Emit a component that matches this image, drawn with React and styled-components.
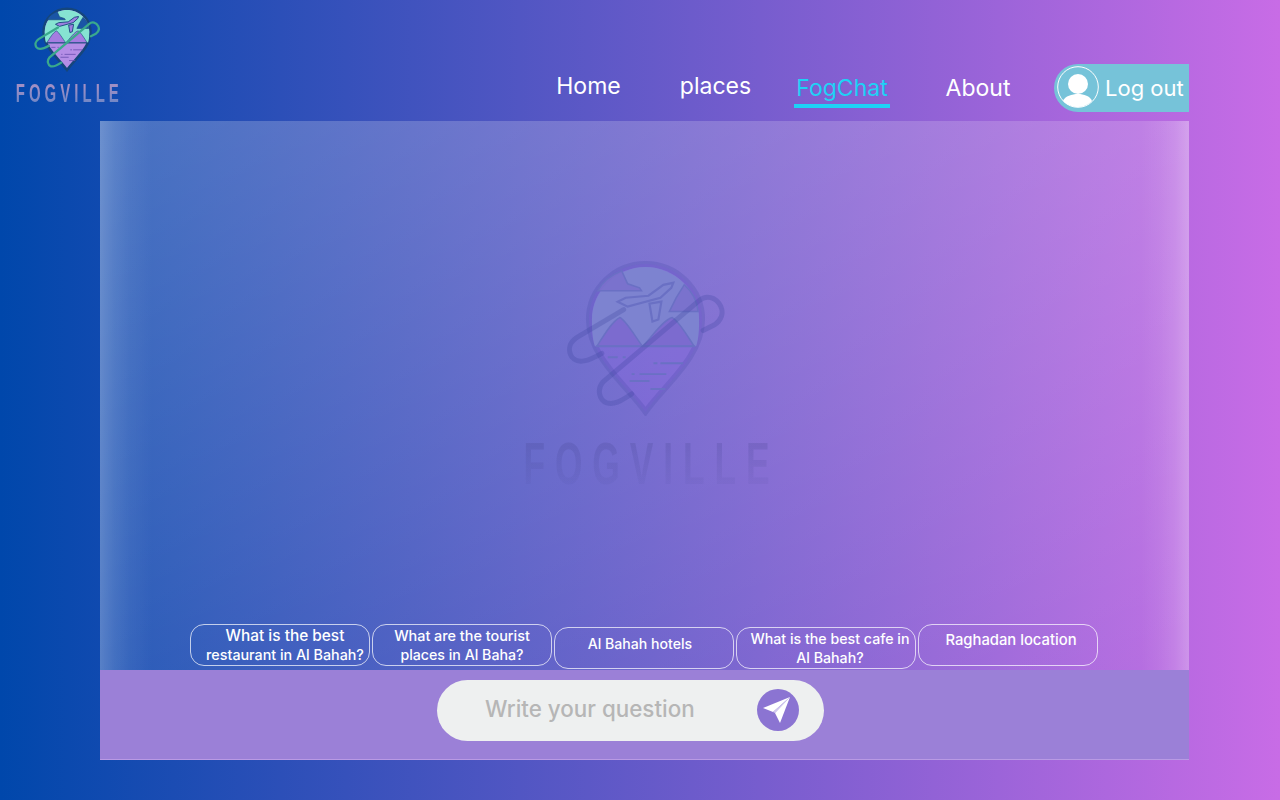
import React from "react";
import styled, { createGlobalStyle } from "styled-components";

const GlobalStyle = createGlobalStyle`
  html, body {
    margin: 0;
    padding: 0;
    height: 100%;
  }
  * {
    box-sizing: border-box;
  }
`;

const Page = styled.div`
  width: 1280px;
  height: 800px;
  overflow: hidden;
  background: linear-gradient(90deg, #0047ab 0%, #c86ce6 100%);
  font-family: "Inter", "Open Sans", sans-serif;
  color: #fff;
`;

const Header = styled.header`
  height: 121px;
  padding: 7px 91px 0 14px;
  display: flex;
  justify-content: space-between;
`;

const Brand = styled.div`
  width: 105px;
  display: flex;
  flex-direction: column;
  align-items: center;
`;

// no condensed face is installed, so the wide one gets squeezed
const Wordmark = styled.div`
  font-family: "Liberation Sans", sans-serif;
  font-size: ${(p) => p.$size}px;
  line-height: 1;
  font-weight: 700;
  letter-spacing: ${(p) => p.$spacing}px;
  margin-right: ${(p) => p.$nudge - p.$spacing}px;
  margin-top: ${(p) => p.$top}px;
  white-space: nowrap;
  flex: none;
  transform: scaleX(0.6);
  color: transparent;
  background: ${(p) => p.$fill};
  -webkit-background-clip: text;
  background-clip: text;
`;

const Nav = styled.nav`
  display: flex;
  align-items: flex-start;
  padding-top: 57px;
`;

const NavLink = styled.a`
  width: ${(p) => p.$width}px;
  height: 48px;
  display: flex;
  justify-content: center;
  align-items: center;
  font-size: 23px;
  padding-bottom: ${(p) => p.$lift}px;
  color: ${(p) => (p.$active ? "#1dd2f6" : "#fff")};
`;

const ActiveLabel = styled.span`
  padding: 0 2px 2px;
  border-bottom: 4px solid #1dd2f6;
  margin-top: 6px;
`;

const LogoutButton = styled.button`
  margin-left: 3px;
  width: 135px;
  height: 48px;
  padding: 0 6px 0 3px;
  border: 0;
  border-radius: 24px 0 0 24px;
  background: #76c3d9;
  color: #fff;
  font: 400 22px "Inter", sans-serif;
  display: flex;
  align-items: center;
  gap: 6px;
  white-space: nowrap;
`;

const AvatarMark = styled.svg`
  flex: none;
  margin-bottom: 3px;
`;

const Panel = styled.main`
  margin-left: 100px;
  width: 1089px;
  height: 639px;
  display: flex;
  flex-direction: column;
  background:
    linear-gradient(90deg, rgba(255, 255, 255, 0.22) 0, rgba(255, 255, 255, 0.12) 14px, rgba(255, 255, 255, 0.05) 30px, rgba(255, 255, 255, 0) 52px),
    linear-gradient(270deg, rgba(255, 255, 255, 0.26) 0, rgba(255, 255, 255, 0.13) 14px, rgba(255, 255, 255, 0.05) 30px, rgba(255, 255, 255, 0) 48px),
    linear-gradient(165deg, rgba(255, 255, 255, 0.22) 0%, rgba(255, 255, 255, 0.12) 50%, rgba(255, 255, 255, 0.02) 100%);
`;

const Chat = styled.section`
  flex: 1;
  min-height: 0;
  display: flex;
  flex-direction: column;
  align-items: center;
  padding-top: 139px;
`;

const Watermark = styled.div`
  display: flex;
  flex-direction: column;
  align-items: center;
  margin-left: 1px;
`;

const Suggestions = styled.div`
  margin-top: auto;
  align-self: flex-start;
  padding-left: 90px;
  display: flex;
  gap: 2px;
  height: 46px;
`;

const Chip = styled.button`
  width: 180px;
  height: 42px;
  margin-top: ${(p) => p.$drop}px;
  padding: ${(p) => (p.$single ? "6px" : "0")} 0 0 ${(p) => Math.max(p.$shift * 2, 0)}px;
  padding-right: ${(p) => Math.max(-p.$shift * 2, 0)}px;
  border: 1px solid rgba(255, 255, 255, 0.7);
  border-radius: 14px;
  background: transparent;
  color: #fff;
  font: 500 14px/19px "Inter", sans-serif;
  display: flex;
  flex-direction: column;
  align-items: center;
  justify-content: ${(p) => (p.$single ? "flex-start" : "center")};
  white-space: nowrap;
`;

const ChipLine = styled.span`
  font-size: ${(p) => p.$size}px;
`;

const Composer = styled.footer`
  height: 90px;
  flex: none;
  padding: 10px 0 0 337px;
  background: #9b80d7;
  border-bottom: 1px solid #b99ae4;
`;

const InputPill = styled.form`
  width: 387px;
  height: 61px;
  padding: 0 25px 0 48px;
  border-radius: 31px;
  background: #eef0f0;
  display: flex;
  align-items: center;
`;

const Question = styled.input`
  flex: 1;
  min-width: 0;
  padding: 0 0 4px;
  border: 0;
  outline: 0;
  background: transparent;
  font: 500 22.4px "Inter", sans-serif;
  color: #555;
  &::placeholder {
    color: #b6b6b6;
    opacity: 1;
  }
`;

const SendButton = styled.button`
  width: 42px;
  height: 42px;
  flex: none;
  margin-bottom: 2px;
  padding: 0;
  border: 0;
  border-radius: 50%;
  background: #8b74d2;
  display: flex;
  align-items: center;
  justify-content: center;
`;

const colourLogo = {
  ring: "#15467c",
  sky: "#86e3d2",
  cloud: "#1a55a6",
  land: "#a57ce0",
  water: "#b58ee6",
  dash: "#6a4fb0",
  clip: "#3aa98c",
  plane: "#9d7fe0",
  line: "#15467c",
  clipWidth: 5.5,
};

const ghostLogo = {
  ring: "rgba(58, 66, 160, 0.2)",
  sky: "#7d83d0",
  cloud: "rgba(122, 112, 204, 0.9)",
  land: "#7c6bcf",
  water: "rgba(140, 100, 230, 0.3)",
  dash: "#6a70c4",
  clip: "rgba(58, 66, 160, 0.27)",
  plane: "#7d83d0",
  line: "#6a70c4",
  clipWidth: 5,
};

// same drawing for the header mark and the faded one behind the chat
function Logo({ size, colors }) {
  const pin = "M80 153C61 126 23 98 23 60C23 29 49 4 80 4C111 4 137 29 137 60C137 98 99 126 80 153Z";
  return (
    <svg width={size} height={size * 0.98} viewBox="0 0 160 157" fill="none">
      <path d={pin} fill={colors.water} stroke={colors.ring} strokeWidth="6" />
      <path d="M29 87C26 78 26 68 26 60C26 31 51 7 80 7C109 7 134 31 134 60C134 68 134 78 131 87Z" fill={colors.sky} />
      <path d="M56 11L62 24L74 28L76 31H32C37 21 46 15 56 11Z" fill={colors.cloud} stroke={colors.line} strokeWidth="1.5" />
      <path d="M119 25L111 38L104 52H133C132 42 127 32 119 25Z" fill={colors.cloud} stroke={colors.line} strokeWidth="1.5" />
      <path d="M31 87C38 76 46 62 54 58C60 60 70 78 77 87C86 78 98 60 107 58C114 62 122 76 129 87Z" fill={colors.land} stroke={colors.line} strokeWidth="1.5" />
      <path d="M30 87H130" stroke={colors.line} strokeWidth="2" />
      <path
        d="M42 98H52M57 98H60M95 104H118M92 104H88M74 115H101M69 115H66M64 122H84M85 130H100"
        stroke={colors.dash}
        strokeWidth="2"
      />
      <path
        d="M52 42L62 47L95 38L106 28L108 23L98 25L83 36L60 38Z"
        fill={colors.plane}
        stroke={colors.line}
        strokeWidth="2.2"
      />
      <path d="M84 44L87 62L93 60L96 42Z" fill={colors.plane} stroke={colors.line} strokeWidth="2.2" />
      <path
        d="M58 50L11 78C2 84 2 92 6 98C12 105 22 102 36 94"
        stroke={colors.clip}
        strokeWidth={colors.clipWidth}
        strokeLinecap="round"
      />
      <path
        d="M66 135C54 143 48 146 41 144C33 141 31 130 37 123L134 41C141 35 151 37 156 47C159 54 156 61 150 65L138 71"
        stroke={colors.clip}
        strokeWidth={colors.clipWidth}
        strokeLinecap="round"
      />
    </svg>
  );
}

function UserAvatar() {
  return (
    <AvatarMark width="42" height="42" viewBox="0 0 42 42">
      <circle cx="21" cy="21" r="20.3" fill="none" stroke="#fff" strokeWidth="1" />
      <circle cx="21" cy="18" r="10" fill="#fff" />
      <path d="M6 35C8 30 15 28 21 28C27 28 33 30 35 35C31 39 26 41 21 41C16 41 10 39 6 35Z" fill="#fff" />
    </AvatarMark>
  );
}

function PlaneIcon() {
  return (
    <svg width="42" height="42" viewBox="0 0 42 42">
      <path d="M33 8L6 19L16 23Z" fill="#fff" />
      <path d="M33 8L16 23L18 24Z" fill="#d3caef" />
      <path d="M33 8L18 24L23 34Z" fill="#fff" />
    </svg>
  );
}

const questions = [
  { lines: [["What is the best", 15.4], ["restaurant in Al Bahah?", 14.3]], drop: 0, shift: 5 },
  { lines: [["What are the tourist", 14.4], ["places in Al Baha?", 14.2]], drop: 0, shift: 0 },
  { lines: [["Al Bahah hotels", 14.1]], drop: 3, shift: -4, single: true },
  { lines: [["What is the best cafe in", 14.2], ["Al Bahah?", 14.2]], drop: 3, shift: 4 },
  { lines: [["Raghadan location", 14.8]], drop: 0, shift: 3, single: true },
];

function App() {
  return (
    <Page>
      <GlobalStyle />
      <Header>
        <Brand>
          <Logo size={66} colors={colourLogo} />
          <Wordmark
            $size={25}
            $spacing={6.7}
            $nudge={2}
            $top={9}
            $fill="linear-gradient(180deg, #a08fc4 25%, #6f86c6 90%)"
          >
            FOGVILLE
          </Wordmark>
        </Brand>
        <Nav>
          <NavLink $width={127} $lift={4}>Home</NavLink>
          <NavLink $width={127} $lift={4}>places</NavLink>
          <NavLink $width={126} $active>
            <ActiveLabel>FogChat</ActiveLabel>
          </NavLink>
          <NavLink $width={146}>About</NavLink>
          <LogoutButton>
            <UserAvatar />
            Log out
          </LogoutButton>
        </Nav>
      </Header>
      <Panel>
        <Chat>
          <Watermark>
            <Logo size={159} colors={ghostLogo} />
            <Wordmark
              $size={59}
              $spacing={16.5}
              $nudge={4}
              $top={19}
              $fill="linear-gradient(180deg, rgba(66, 66, 140, 0.2) 20%, rgba(66, 66, 140, 0.05) 85%)"
            >
              FOGVILLE
            </Wordmark>
          </Watermark>
          <Suggestions>
            {questions.map((q) => (
              <Chip key={q.lines[0][0]} $drop={q.drop} $shift={q.shift} $single={q.single}>
                {q.lines.map(([text, size]) => (
                  <ChipLine key={text} $size={size}>{text}</ChipLine>
                ))}
              </Chip>
            ))}
          </Suggestions>
        </Chat>
        <Composer>
          <InputPill>
            <Question placeholder="Write your question" />
            <SendButton type="button">
              <PlaneIcon />
            </SendButton>
          </InputPill>
        </Composer>
      </Panel>
    </Page>
  );
}

export default App;
